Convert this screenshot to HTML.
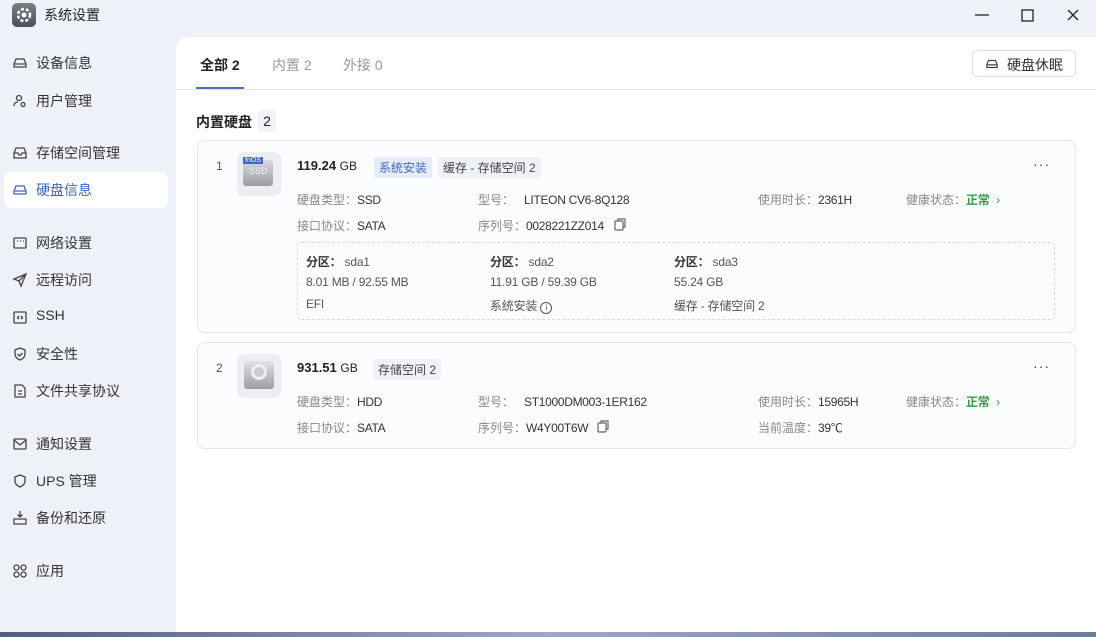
<!DOCTYPE html>
<html><head><meta charset="utf-8"><style>
*{box-sizing:border-box;margin:0;padding:0}
body{width:1096px;height:637px;overflow:hidden;background:#eef2f8;font-family:"Liberation Sans","Noto Sans CJK SC",sans-serif;color:#222;position:relative}
.abs{position:absolute;white-space:nowrap}
.logo{left:12px;top:3px;width:24px;height:24px;border-radius:5px;background:linear-gradient(#7a7f88,#4b5059)}
.title{left:44px;top:5px;font-size:14px;color:#222}
.side{font-size:14px;color:#333}
.side svg{position:absolute;left:12px;top:2px}
.active{left:4px;top:172px;width:164px;height:36px;background:#fff;border-radius:7px}
.main{left:176px;top:37px;width:920px;height:595px;background:#fff;border-top-left-radius:12px}
.bottom{left:0;top:632px;width:1096px;height:5px;background:linear-gradient(90deg,#50607a,#9aaac2,#6a7c98)}
.tab{font-size:14px;top:55px;color:#999}
.card{left:197px;width:879px;border:1px solid #e3e6ea;border-radius:8px;background:#fbfcfd}
.ic{width:44px;height:44px;border-radius:7px;background:#eceef1}
.lb{font-size:12px;color:#888}
.lb b{font-weight:normal;color:#333;letter-spacing:-0.3px}
.tag{font-size:12px;padding:2px 5px;border-radius:3px;background:#eef1f5;color:#444}
.part{font-size:12px;color:#555;letter-spacing:-0.2px}
</style></head><body>
<div class="abs logo"><svg width="24" height="24" viewBox="0 0 24 24"><circle cx="12" cy="12" r="6" fill="none" stroke="#fff" stroke-width="2.5" stroke-dasharray="3 2"/><circle cx="12" cy="12" r="2.5" fill="#fff"/></svg></div>
<div class="abs title">系统设置</div>
<svg class="abs" style="left:973px;top:8px" width="110" height="16"><path d="M2 7h14" stroke="#222" stroke-width="1.3"/><rect x="49" y="2" width="11" height="11" fill="none" stroke="#222" stroke-width="1.3"/><path d="M95 2l10 10M105 2l-10 10" stroke="#222" stroke-width="1.3"/></svg>

<div class="abs active"></div>
<div class="abs side" style="left:0;top:53px;width:170px;height:20px"><svg width="16" height="16" viewBox="0 0 16 16" fill="none" stroke="#444" stroke-width="1.3"><path d="M2 9l2-5h8l2 5v3H2zM2 9h12"/></svg><span style="position:absolute;left:36px">设备信息</span></div>
<div class="abs side" style="left:0;top:91px;width:170px;height:20px"><svg width="16" height="16" viewBox="0 0 16 16" fill="none" stroke="#444" stroke-width="1.3"><circle cx="7" cy="5" r="2.5"/><path d="M2 13c0-3 2-4 4-4"/><circle cx="11" cy="11.5" r="2"/></svg><span style="position:absolute;left:36px">用户管理</span></div>
<div class="abs side" style="left:0;top:143px;width:170px;height:20px"><svg width="16" height="16" viewBox="0 0 16 16" fill="none" stroke="#444" stroke-width="1.3"><path d="M2 8l2-5h8l2 5v5H2zM2 8h4l1 2h2l1-2h4"/></svg><span style="position:absolute;left:36px">存储空间管理</span></div>
<div class="abs side" style="left:0;top:180px;width:170px;height:20px;color:#3d63c4"><svg width="16" height="16" viewBox="0 0 16 16" fill="none" stroke="#3d63c4" stroke-width="1.3"><path d="M2 9l2-5h8l2 5v3H2zM2 9h12"/></svg><span style="position:absolute;left:36px">硬盘信息</span></div>
<div class="abs side" style="left:0;top:233px;width:170px;height:20px"><svg width="16" height="16" viewBox="0 0 16 16" fill="none" stroke="#444" stroke-width="1.3"><rect x="2" y="3" width="12" height="10" rx="1"/><path d="M5 6h1M8 6h1M11 6h1"/></svg><span style="position:absolute;left:36px">网络设置</span></div>
<div class="abs side" style="left:0;top:270px;width:170px;height:20px"><svg width="16" height="16" viewBox="0 0 16 16" fill="none" stroke="#444" stroke-width="1.3"><path d="M14 2L2 7l5 2 2 5zM7 9l7-7"/></svg><span style="position:absolute;left:36px">远程访问</span></div>
<div class="abs side" style="left:0;top:307px;width:170px;height:20px"><svg width="16" height="16" viewBox="0 0 16 16" fill="none" stroke="#444" stroke-width="1.3"><rect x="2" y="3" width="12" height="11" rx="1"/><path d="M7 7l-1.5 1.5L7 10M9 7l1.5 1.5L9 10"/></svg><span style="position:absolute;left:36px">SSH</span></div>
<div class="abs side" style="left:0;top:344px;width:170px;height:20px"><svg width="16" height="16" viewBox="0 0 16 16" fill="none" stroke="#444" stroke-width="1.3"><path d="M8 2l5 2v4c0 3-2.5 5-5 6-2.5-1-5-3-5-6V4zM5.5 8l2 2 3-3"/></svg><span style="position:absolute;left:36px">安全性</span></div>
<div class="abs side" style="left:0;top:381px;width:170px;height:20px"><svg width="16" height="16" viewBox="0 0 16 16" fill="none" stroke="#444" stroke-width="1.3"><path d="M3 2h7l3 3v9H3zM6 8h4M6 11h4"/></svg><span style="position:absolute;left:36px">文件共享协议</span></div>
<div class="abs side" style="left:0;top:434px;width:170px;height:20px"><svg width="16" height="16" viewBox="0 0 16 16" fill="none" stroke="#444" stroke-width="1.3"><rect x="2" y="3" width="12" height="10" rx="1"/><path d="M2 4l6 5 6-5"/></svg><span style="position:absolute;left:36px">通知设置</span></div>
<div class="abs side" style="left:0;top:471px;width:170px;height:20px"><svg width="16" height="16" viewBox="0 0 16 16" fill="none" stroke="#444" stroke-width="1.3"><path d="M8 2l5 2v4c0 3-2.5 5-5 6-2.5-1-5-3-5-6V4z"/></svg><span style="position:absolute;left:36px">UPS 管理</span></div>
<div class="abs side" style="left:0;top:508px;width:170px;height:20px"><svg width="16" height="16" viewBox="0 0 16 16" fill="none" stroke="#444" stroke-width="1.3"><path d="M8 1v6M5.5 4.5L8 7l2.5-2.5M2 9h12v5H2z"/></svg><span style="position:absolute;left:36px">备份和还原</span></div>
<div class="abs side" style="left:0;top:561px;width:170px;height:20px"><svg width="16" height="16" viewBox="0 0 16 16" fill="none" stroke="#444" stroke-width="1.3"><circle cx="4.5" cy="4.5" r="2.5"/><circle cx="11.5" cy="4.5" r="2.5"/><circle cx="4.5" cy="11.5" r="2.5"/><circle cx="11.5" cy="11.5" r="2.5"/></svg><span style="position:absolute;left:36px">应用</span></div>

<div class="abs main"></div>
<div class="abs tab" style="left:200px;color:#222;font-weight:bold">全部 2</div>
<div class="abs tab" style="left:272px">内置 2</div>
<div class="abs tab" style="left:343px">外接 0</div>
<div class="abs" style="left:196px;top:87px;width:48px;height:2px;background:#4a6fc2"></div>
<div class="abs" style="left:176px;top:89px;width:920px;height:1px;background:#e0e3e7"></div>
<div class="abs" style="left:972px;top:50px;width:104px;height:27px;border:1px solid #d9dde3;border-radius:5px;font-size:14px;color:#333;padding:4px 0 0 34px">硬盘休眠<svg style="position:absolute;left:12px;top:6px" width="14" height="14" viewBox="0 0 16 16" fill="none" stroke="#444" stroke-width="1.3"><path d="M2 9l2-5h8l2 5v3H2zM2 9h12"/></svg></div>

<div class="abs" style="left:196px;top:112px;font-size:14px;font-weight:bold">内置硬盘</div>
<div class="abs" style="left:258px;top:110px;width:18px;height:22px;background:#f1f3f6;border-radius:3px;font-size:14px;text-align:center;line-height:22px">2</div>

<div class="abs card" style="top:140px;height:193px"></div>
<div class="abs" style="left:216px;top:159px;font-size:12px;color:#555">1</div>
<div class="abs ic" style="left:237px;top:152px"><div class="abs" style="left:6px;top:8px;width:30px;height:26px;border-radius:3px;background:linear-gradient(#d8dadd,#9a9da2)"></div><div class="abs" style="left:6px;top:5px;font-size:7px;background:#3e63d6;color:#fff;padding:0 2px">fnOS</div><div class="abs" style="left:12px;top:14px;font-size:9px;color:#eee">SSD</div></div>
<div class="abs" style="left:297px;top:158px;font-size:13px"><b>119.24</b> <span style="font-size:12px">GB</span></div>
<div class="abs tag" style="left:374px;top:157px;background:#e4ebfb;color:#4067c9">系统安装</div>
<div class="abs tag" style="left:438px;top:157px">缓存 - 存储空间 2</div>
<div class="abs" style="left:1033px;top:156px;font-size:14px;color:#444;letter-spacing:1px">···</div>
<div class="abs lb" style="left:297px;top:191px">硬盘类型：<b>SSD</b></div>
<div class="abs lb" style="left:478px;top:191px">型号：&nbsp;&nbsp;&nbsp;<b>LITEON CV6-8Q128</b></div>
<div class="abs lb" style="left:758px;top:191px">使用时长：<b>2361H</b></div>
<div class="abs lb" style="left:906px;top:191px">健康状态：<b style="color:#2ea043;font-weight:bold">正常</b> <span style="color:#2ea043">&nbsp;›</span></div>
<div class="abs lb" style="left:297px;top:217px">接口协议：<b>SATA</b></div>
<div class="abs lb" style="left:478px;top:217px">序列号：<b>0028221ZZ014</b></div>
<svg class="abs" style="left:613px;top:217px" width="14" height="14" fill="none" stroke="#666" stroke-width="1.2"><rect x="2" y="4" width="8" height="9" rx="1"/><path d="M5 4V2h7v8h-2"/></svg>
<div class="abs" style="left:297px;top:242px;width:758px;height:78px;border:1px dashed #d5d9de;border-radius:5px"></div>
<div class="abs part" style="left:306px;top:253px"><b style="color:#333">分区：</b> sda1</div>
<div class="abs part" style="left:306px;top:275px">8.01 MB / 92.55 MB</div>
<div class="abs part" style="left:306px;top:297px">EFI</div>
<div class="abs part" style="left:490px;top:253px"><b style="color:#333">分区：</b> sda2</div>
<div class="abs part" style="left:490px;top:275px">11.91 GB / 59.39 GB</div>
<div class="abs part" style="left:490px;top:297px">系统安装 <span style="display:inline-block;width:12px;height:12px;border:1px solid #555;border-radius:50%;font-size:8px;text-align:center;line-height:10px">i</span></div>
<div class="abs part" style="left:674px;top:253px"><b style="color:#333">分区：</b> sda3</div>
<div class="abs part" style="left:674px;top:275px">55.24 GB</div>
<div class="abs part" style="left:674px;top:297px">缓存 - 存储空间 2</div>

<div class="abs card" style="top:342px;height:107px"></div>
<div class="abs" style="left:216px;top:361px;font-size:12px;color:#555">2</div>
<div class="abs ic" style="left:237px;top:354px"><div class="abs" style="left:7px;top:7px;width:30px;height:28px;border-radius:3px;background:linear-gradient(#e0e2e5,#9a9da2)"></div><div class="abs" style="left:14px;top:10px;width:16px;height:16px;border-radius:50%;background:#c9ccd0;border:3px solid #eee"></div></div>
<div class="abs" style="left:297px;top:360px;font-size:13px"><b>931.51</b> <span style="font-size:12px">GB</span></div>
<div class="abs tag" style="left:373px;top:359px">存储空间 2</div>
<div class="abs" style="left:1033px;top:358px;font-size:14px;color:#444;letter-spacing:1px">···</div>
<div class="abs lb" style="left:297px;top:393px">硬盘类型：<b>HDD</b></div>
<div class="abs lb" style="left:478px;top:393px">型号：&nbsp;&nbsp;&nbsp;<b>ST1000DM003-1ER162</b></div>
<div class="abs lb" style="left:758px;top:393px">使用时长：<b>15965H</b></div>
<div class="abs lb" style="left:906px;top:393px">健康状态：<b style="color:#2ea043;font-weight:bold">正常</b> <span style="color:#2ea043">&nbsp;›</span></div>
<div class="abs lb" style="left:297px;top:419px">接口协议：<b>SATA</b></div>
<div class="abs lb" style="left:478px;top:419px">序列号：<b>W4Y00T6W</b></div>
<svg class="abs" style="left:596px;top:419px" width="14" height="14" fill="none" stroke="#666" stroke-width="1.2"><rect x="2" y="4" width="8" height="9" rx="1"/><path d="M5 4V2h7v8h-2"/></svg>
<div class="abs lb" style="left:758px;top:419px">当前温度：<b>39℃</b></div>

<div class="abs bottom"></div>
</body></html>
